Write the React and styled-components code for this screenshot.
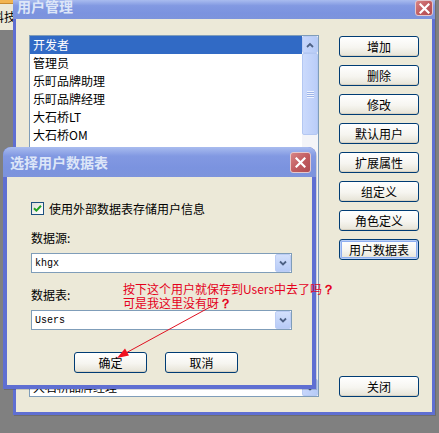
import React from "react";
import styled, { createGlobalStyle } from "styled-components";

const CJK = `"Noto Sans CJK SC", "Liberation Sans", sans-serif`;

const GlobalStyle = createGlobalStyle`
  html, body {
    margin: 0;
    padding: 0;
    background: #808080;
  }
  body {
    font-family: ${CJK};
    font-size: 12px;
    color: #000;
  }
  * {
    box-sizing: border-box;
  }
`;

// rows hidden behind the dialog are left blank: their text can't be read
const users = [
  "开发者",
  "管理员",
  "乐町品牌助理",
  "乐町品牌经理",
  "大石桥LT",
  "大石桥OM",
  "大石桥品牌助理",
  "", "", "", "", "", "", "", "", "", "", "", "",
  "大石桥品牌经理",
];

const sideButtons = ["增加", "删除", "修改", "默认用户", "扩展属性", "组定义", "角色定义", "用户数据表"];

export default function App() {
  return (
    <Desktop>
      <GlobalStyle />

      {/* window behind, only a corner shows */}
      <BackWindow>
        <BackStrip />
        <BackText>科技</BackText>
      </BackWindow>

      {/* 用户管理 */}
      <Window $x={13} $y={0} $w={422} $h={415}>
        <TitleBar $h={19} $pad={4}>
          <Title $top={-1}>用户管理</Title>
          <CloseButton $w={18} $h={16} $top={0} $right={2}>
            <CloseIcon />
          </CloseButton>
        </TitleBar>
        <Body $frame={3}>
          <MainLayout>
            <ListBox>
              <Rows>
                {users.map((u, i) => (
                  <Row key={i} $selected={i === 0}>
                    {u}
                  </Row>
                ))}
              </Rows>
              <ScrollBar>
                <ScrollArrow>
                  <Chevron up />
                </ScrollArrow>
                <Thumb>
                  <Grip />
                </Thumb>
                <Track />
                <ScrollArrow>
                  <Chevron />
                </ScrollArrow>
              </ScrollBar>
            </ListBox>

            <ButtonColumn>
              {sideButtons.map((b) => (
                <Button key={b} $default={b === "用户数据表"}>
                  {b}
                </Button>
              ))}
              <Button $push>关闭</Button>
            </ButtonColumn>
          </MainLayout>
        </Body>
      </Window>

      {/* 选择用户数据表 */}
      <Window $x={3} $y={147} $w={313} $h={242} $round>
        <TitleBar $h={30} $pad={7}>
          <Title $top={8}>选择用户数据表</Title>
          <CloseButton $w={21} $h={21} $top={5} $right={5}>
            <CloseIcon />
          </CloseButton>
        </TitleBar>
        <Body $frame={4}>
          <DialogForm>
            <CheckRow>
              <CheckBox>
                <svg width="9" height="9" viewBox="0 0 9 9">
                  <path d="M1 4.2 L3.4 6.6 L8 1.8" fill="none" stroke="#21a121" strokeWidth="2" />
                </svg>
              </CheckBox>
              <span>使用外部数据表存储用户信息</span>
            </CheckRow>

            <FieldLabel>数据源:</FieldLabel>
            <Combo>
              <ComboText>khgx</ComboText>
              <ComboButton>
                <Chevron />
              </ComboButton>
            </Combo>

            <FieldLabel>数据表:</FieldLabel>
            <Combo>
              <ComboText>Users</ComboText>
              <ComboButton>
                <Chevron />
              </ComboButton>
            </Combo>

            <DialogButtons>
              <Button $w={73}>确定</Button>
              <Button $w={73}>取消</Button>
            </DialogButtons>
          </DialogForm>
        </Body>
      </Window>

      {/* red annotation over the screenshot */}
      <Note>
        按下这个用户就保存到Users中去了吗<Q>？</Q>
        <br />
        可是我这里没有呀<Q>？</Q>
      </Note>
      <Arrow width="439" height="433" viewBox="0 0 439 433">
        <line x1="212" y1="306" x2="124" y2="354" stroke="#e01020" strokeWidth="1" />
        <polygon points="117,358 125,348.5 129,355.5" fill="#f01020" />
      </Arrow>
    </Desktop>
  );
}

function CloseIcon() {
  return (
    <svg width="11" height="11" viewBox="0 0 11 11">
      <path d="M1.5 1.5 L9.5 9.5 M9.5 1.5 L1.5 9.5" stroke="#fff" strokeWidth="2.2" strokeLinecap="square" />
    </svg>
  );
}

function Chevron({ up }) {
  return (
    <svg width="8" height="6" viewBox="0 0 8 6">
      <path
        d={up ? "M1 5 L4 2 L7 5" : "M1 1.5 L4 4.5 L7 1.5"}
        fill="none"
        stroke="#4d6185"
        strokeWidth="1.8"
      />
    </svg>
  );
}

const Desktop = styled.div`
  position: relative;
  width: 439px;
  height: 433px;
  overflow: hidden;
  background: #808080;
`;

// - window behind
const BackWindow = styled.div`
  position: absolute;
  left: 0;
  top: 0;
  width: 13px;
  height: 30px;
  overflow: hidden;
  background: #ece9d8;
`;
const BackStrip = styled.div`
  height: 4px;
  background: #f2b450;
  border-bottom: 1px solid #c88a30;
`;
const BackText = styled.div`
  margin: 6px 0 0 -8px;
  white-space: nowrap;
  font-size: 12px;
  line-height: 14px;
`;

// - windows
const Window = styled.div`
  position: absolute;
  left: ${(p) => p.$x}px;
  top: ${(p) => p.$y}px;
  width: ${(p) => p.$w}px;
  height: ${(p) => p.$h}px;
  display: flex;
  flex-direction: column;
  background: #5f6fd2;
  border-radius: ${(p) => (p.$round ? "8px 8px 0 0" : "0")};
  overflow: hidden;
  box-shadow: 1px 1px 0 rgba(0, 0, 0, 0.15);
`;
const TitleBar = styled.div`
  position: relative;
  flex: none;
  height: ${(p) => p.$h}px;
  padding-left: ${(p) => p.$pad}px;
  background: linear-gradient(to bottom, #a9bcef 0%, #8299e2 30%, #7b93df 70%, #7d94dc 100%);
`;
const Title = styled.div`
  position: relative;
  top: ${(p) => p.$top}px;
  font-size: 14px;
  line-height: 14px;
  font-weight: bold;
  color: #dde6f8;
  white-space: nowrap;
`;
const CloseButton = styled.div`
  position: absolute;
  top: ${(p) => p.$top}px;
  right: ${(p) => p.$right}px;
  width: ${(p) => p.$w}px;
  height: ${(p) => p.$h}px;
  display: flex;
  align-items: center;
  justify-content: center;
  border: 1px solid #e4c8cc;
  border-radius: 3px;
  background: linear-gradient(135deg, #d88484 0%, #c05a5e 55%, #b04c52 100%);
`;
const Body = styled.div`
  flex: 1;
  margin: 0 ${(p) => p.$frame}px ${(p) => p.$frame}px;
  background: #ece9d8;
`;

// - main window content
const MainLayout = styled.div`
  display: flex;
  gap: 20px;
  padding: 16px 13px 0 13px;
`;
const ListBox = styled.div`
  display: flex;
  width: 290px;
  height: 362px;
  border: 1px solid #7f9db9;
  background: #fff;
`;
const Rows = styled.div`
  flex: 1;
  overflow: hidden;
`;
const Row = styled.div`
  height: 18px;
  padding-left: 3px;
  line-height: 18px;
  font-size: 12px;
  white-space: nowrap;
  color: ${(p) => (p.$selected ? "#fff" : "#000")};
  background: ${(p) => (p.$selected ? "#316ac5" : "transparent")};
`;
const ScrollBar = styled.div`
  width: 16px;
  display: flex;
  flex-direction: column;
  background: #f3f4f8;
`;
const ScrollArrow = styled.div`
  flex: none;
  height: 17px;
  display: flex;
  align-items: center;
  justify-content: center;
  border: 1px solid #b8cbf4;
  border-radius: 2px;
  background: linear-gradient(to right, #c7d6fb, #b6cbf7);
`;
const Thumb = styled.div`
  flex: none;
  height: 82px;
  display: flex;
  align-items: center;
  justify-content: center;
  border: 1px solid #b3c7f2;
  border-radius: 2px;
  background: linear-gradient(to right, #cbdafc, #bacdf8);
`;
const Grip = styled.div`
  width: 7px;
  height: 7px;
  background: repeating-linear-gradient(to bottom, #eef3fe 0 1px, #9db4e8 1px 2px);
`;
const Track = styled.div`
  flex: 1;
`;
const ButtonColumn = styled.div`
  display: flex;
  flex-direction: column;
  gap: 8px;
  padding-top: 1px;
  height: 362px;
`;
const Button = styled.div`
  flex: none;
  width: ${(p) => p.$w || 80}px;
  height: 21px;
  margin-top: ${(p) => (p.$push ? "auto" : "0")};
  display: flex;
  align-items: center;
  justify-content: center;
  border: 1px solid #003c74;
  border-radius: 3px;
  background: linear-gradient(to bottom, #ffffff 0%, #f6f5f0 55%, #e6e3d6 100%);
  box-shadow: ${(p) =>
    p.$default
      ? "inset 0 0 0 1px #b8cef5, inset 0 0 0 2px #8eaef0"
      : "inset 0 -1px 0 #d8d2c2"};
  font-size: 12px;
  line-height: 14px;
  color: #000;
`;

// - dialog content
const DialogForm = styled.div`
  display: flex;
  flex-direction: column;
  align-items: flex-start;
  padding: 25px 20px 0 24px;
`;
const CheckRow = styled.div`
  display: flex;
  align-items: center;
  gap: 5px;
  height: 13px;
  font-size: 12px;
  margin-bottom: 16px;
`;
const CheckBox = styled.span`
  width: 13px;
  height: 13px;
  display: flex;
  align-items: center;
  justify-content: center;
  border: 1px solid #1c5180;
  background: linear-gradient(135deg, #dcdcd7 0%, #f4f4f0 60%, #ffffff 100%);
`;
const FieldLabel = styled.div`
  height: 14px;
  line-height: 14px;
  font-size: 12px;
  margin: 0 0 8px;
`;
const Combo = styled.div`
  display: flex;
  align-items: center;
  width: 261px;
  height: 20px;
  margin-bottom: 15px;
  border: 1px solid #7f9db9;
  background: #fff;
`;
const ComboText = styled.span`
  flex: 1;
  padding-left: 3px;
  font-family: "Liberation Mono", monospace;
  font-size: 10px;
  color: #000;
`;
const ComboButton = styled.span`
  width: 16px;
  height: 18px;
  display: flex;
  align-items: center;
  justify-content: center;
  border: 1px solid #bccdf5;
  border-radius: 2px;
  background: linear-gradient(to bottom, #d3e0fc, #b7cbf7);
`;
const DialogButtons = styled.div`
  display: flex;
  gap: 18px;
  margin: 7px 0 0 43px;
`;

// - annotation
const Note = styled.div`
  position: absolute;
  left: 123px;
  top: 282px;
  font-size: 12px;
  line-height: 13px;
  color: #e4001c;
  white-space: nowrap;
`;
const Q = styled.b`
  font-family: "Liberation Sans", sans-serif;
  font-size: 13px;
`;
const Arrow = styled.svg`
  position: absolute;
  left: 0;
  top: 0;
  pointer-events: none;
`;
